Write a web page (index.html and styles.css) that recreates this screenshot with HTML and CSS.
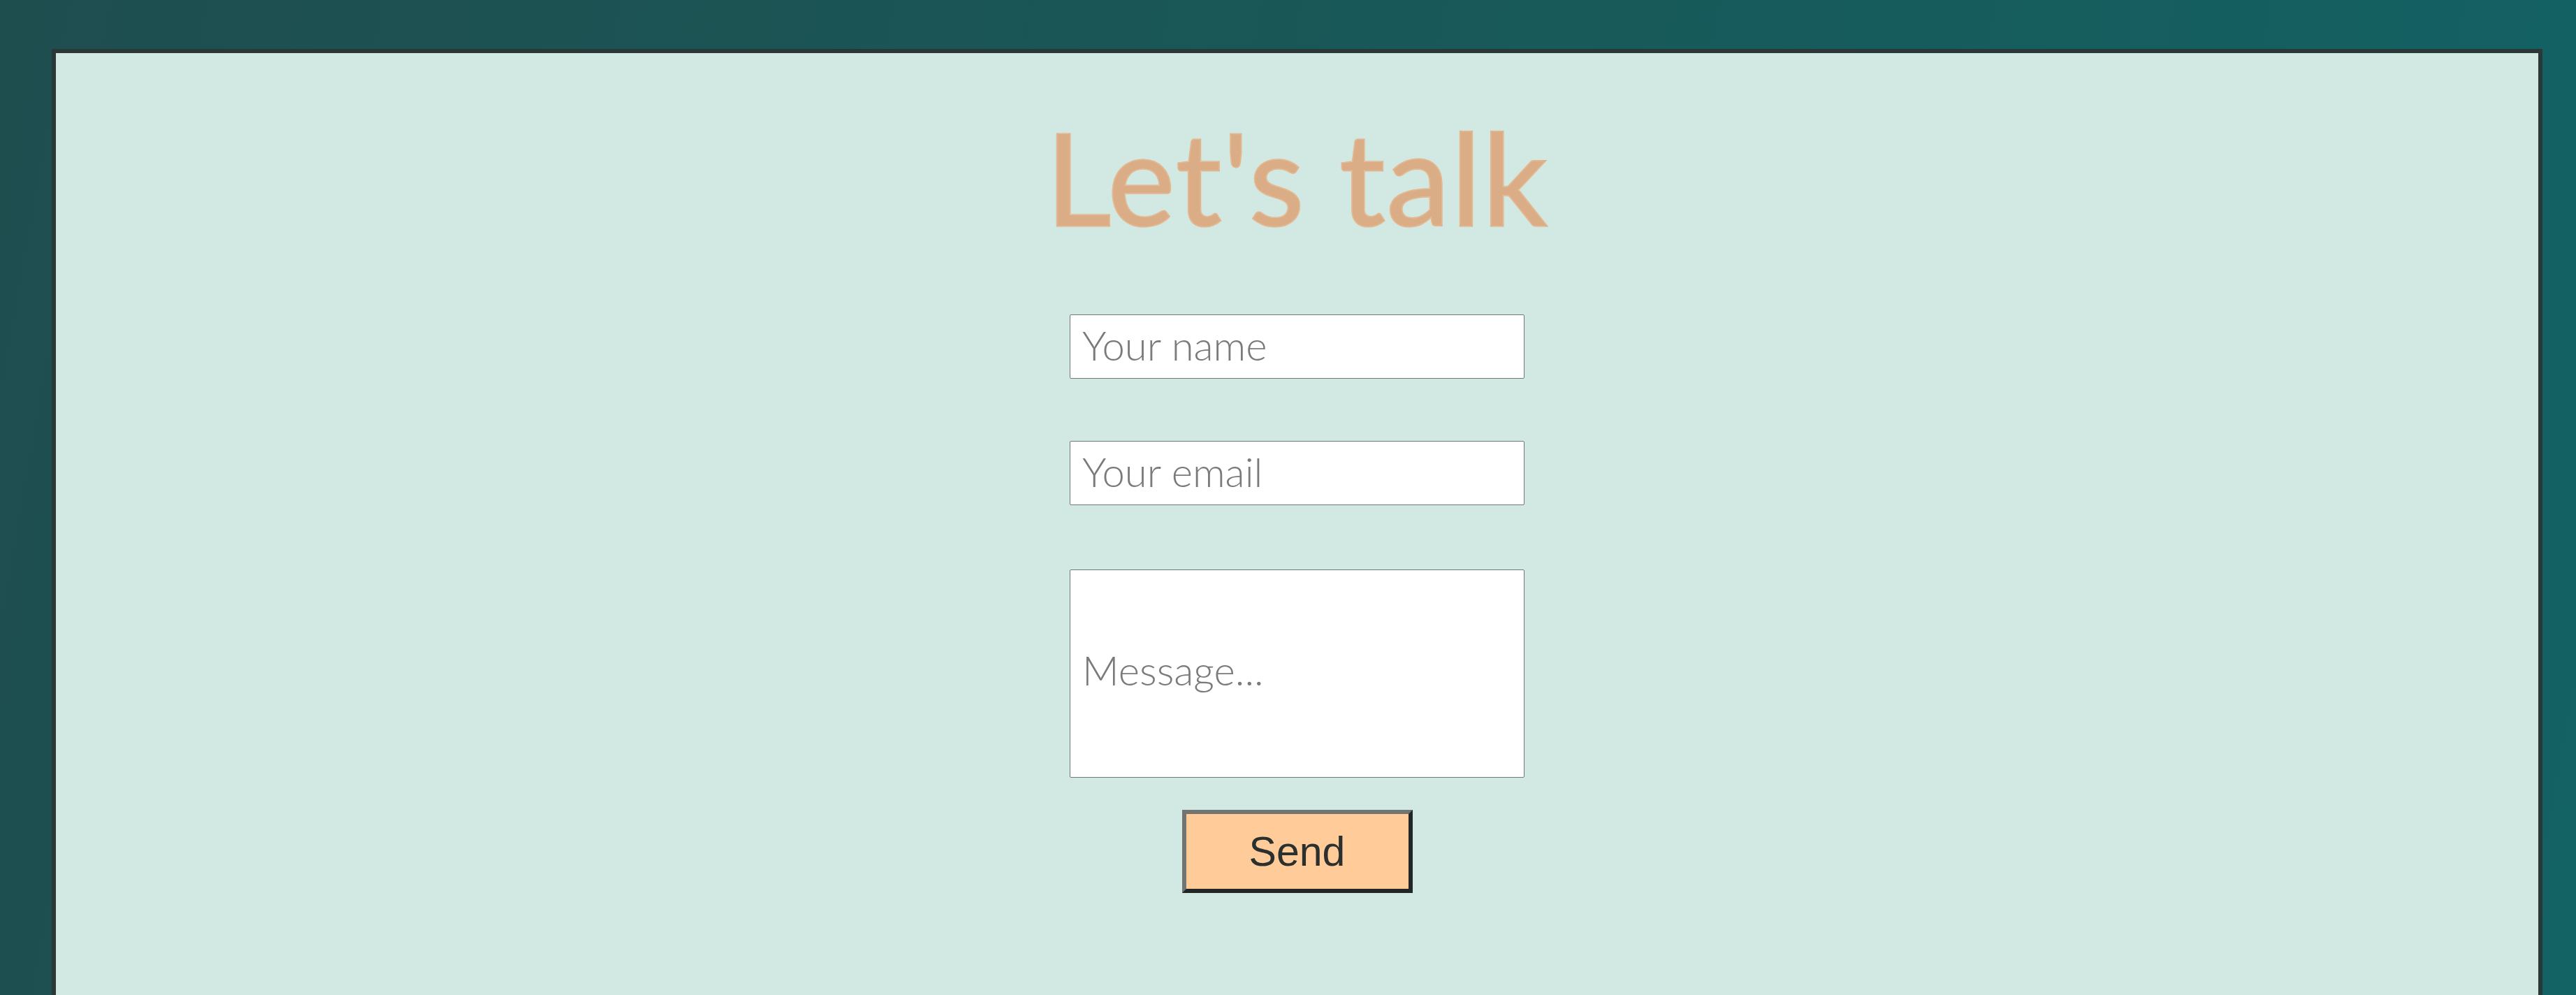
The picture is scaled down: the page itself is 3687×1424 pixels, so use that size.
FILE: index.html
```html
<!DOCTYPE html>
<html lang="en">
<head>
<meta charset="utf-8">
<title>Let's talk</title>
<link rel="stylesheet" href="styles.css">
</head>
<body>
  <main class="card">
    <h1 class="title">Let's talk</h1>
    <form class="form">
      <input class="field" type="text" placeholder="Your name">
      <input class="field field-email" type="email" placeholder="Your email">
      <textarea class="field field-message" placeholder="Message..."></textarea>
      <button class="send" type="button">Send</button>
    </form>
  </main>
</body>
</html>
```

FILE: styles.css
```css
html, body {
  margin: 0;
  height: 100%;
}

body {
  background: linear-gradient(100deg, #1f4e4f 0%, #195858 50%, #136264 100%);
  padding: 70px 48px 0 74px;
  box-sizing: border-box;
  overflow: hidden;
  font-family: "Lato", "Liberation Sans", sans-serif;
}

.card {
  background: #d2e8e2;
  border: 6px solid #2a3937;
  border-bottom: none;
  min-height: 1500px;
  display: flex;
  flex-direction: column;
  align-items: center;
}

.title {
  margin: 68px 0 0 0;
  font-family: "Lato", "Liberation Sans", sans-serif;
  font-weight: 400;
  font-size: 182px;
  line-height: 1.2;
  letter-spacing: 2px;
  color: #dbad87;
  -webkit-text-stroke: 3px #dbad87;
  paint-order: stroke fill;
  text-shadow: 0 0 3px #f6d2a8;
}

.form {
  display: flex;
  flex-direction: column;
  align-items: center;
  margin-top: 88px;
}

.field {
  box-sizing: border-box;
  width: 651px;
  height: 92px;
  border: 1.5px solid #6f7977;
  border-radius: 2px;
  background: #ffffff;
  padding: 0 17px 6px 17px;
  font-family: "Lato", "Liberation Sans", sans-serif;
  font-weight: 300;
  font-size: 58px;
  color: #555;
  outline: none;
}

.field::placeholder {
  color: #7a7a7a;
  font-weight: 300;
}

.field-email {
  margin-top: 89px;
}

.field-message {
  margin-top: 92px;
  height: 298px;
  padding: 108px 17px 0 17px;
  resize: none;
  line-height: 1.2;
  overflow: hidden;
}

.send {
  margin-top: 46px;
  width: 330px;
  height: 119px;
  background: #ffcc99;
  border-style: solid;
  border-width: 6px;
  border-color: #727472 #222624 #222624 #727472;
  font-family: "Liberation Sans", Arial, sans-serif;
  font-size: 59px;
  color: #2b302e;
  padding: 0;
  cursor: pointer;
}
```
